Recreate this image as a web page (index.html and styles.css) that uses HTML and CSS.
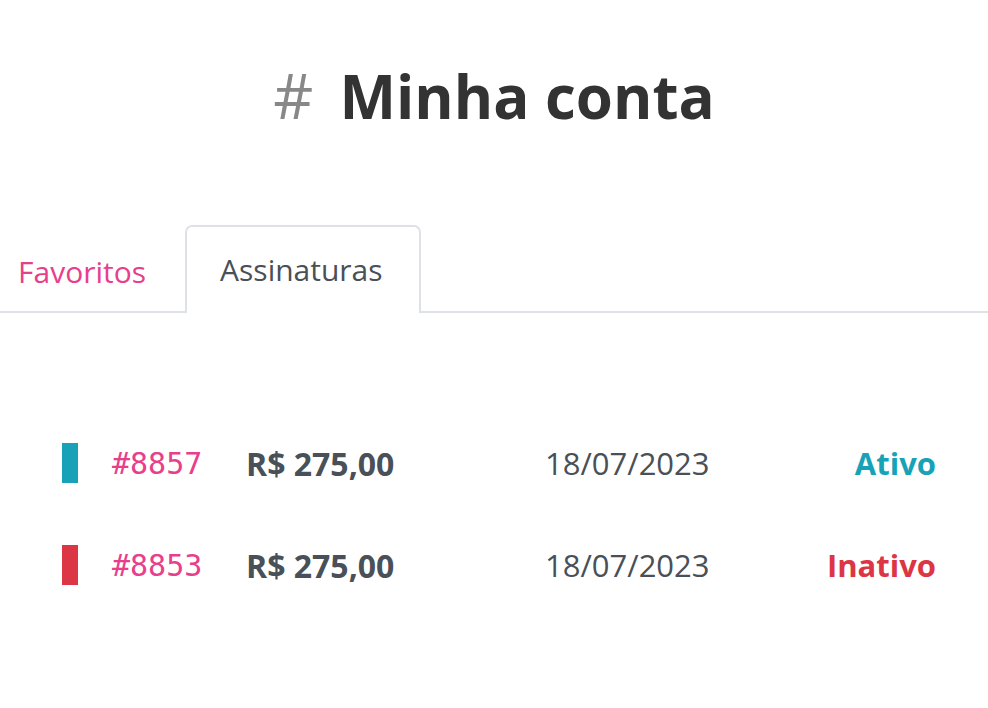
FILE: index.html
```html
<!DOCTYPE html>
<html lang="pt-BR">
<head>
<meta charset="utf-8">
<title>Minha conta</title>
<link rel="stylesheet" href="styles.css">
</head>
<body>
  <header class="page-header">
    <h1 class="title"><span class="hash">#</span>Minha conta</h1>
  </header>

  <nav class="tabs">
    <a class="tab" href="#">Favoritos</a>
    <a class="tab active" href="#">Assinaturas</a>
  </nav>

  <section class="subs">
    <div class="sub">
      <span class="bar bar-active"></span>
      <code class="sub-id">#8857</code>
      <strong class="amount">R$ 275,00</strong>
      <span class="date">18/07/2023</span>
      <strong class="status status-active">Ativo</strong>
    </div>
    <div class="sub">
      <span class="bar bar-inactive"></span>
      <code class="sub-id">#8853</code>
      <strong class="amount">R$ 275,00</strong>
      <span class="date">18/07/2023</span>
      <strong class="status status-inactive">Inativo</strong>
    </div>
  </section>
</body>
</html>
```

FILE: styles.css
```css
* { box-sizing: border-box; }

html, body {
  margin: 0;
  padding: 0;
  background: #fff;
}

body {
  font-family: "Open Sans", "Noto Sans", sans-serif;
  color: #495057;
  width: 988px;
  overflow: hidden;
}

.page-header {
  height: 196px;
  display: flex;
  align-items: center;
  justify-content: center;
  padding-bottom: 6px;
}

.title {
  margin: 0;
  font-size: 60px;
  font-weight: 700;
  color: #333;
  line-height: 1;
  display: flex;
  align-items: baseline;
}

.hash {
  font-weight: 400;
  font-size: 62px;
  color: #888;
  margin-right: 26px;
}

.tabs {
  display: flex;
  align-items: flex-end;
  height: 117px;
  border-bottom: 2px solid #dee2e6;
  padding-top: 31px;
}

.tab {
  display: block;
  font-size: 30px;
  line-height: 1;
  text-decoration: none;
  color: #e83e8c;
  padding: 28px 18px 26px 16px;
  border: 2px solid transparent;
  border-bottom: 0;
  border-radius: 7px 7px 0 0;
  margin-bottom: -2px;
}

.tab + .tab { margin-left: 19px; }

.tab.active {
  color: #495057;
  background: #fff;
  border-color: #dee2e6;
  padding: 28px 36px 28px 33px;
}

.subs {
  padding: 99px 52px 0 62px;
  display: flex;
  flex-direction: column;
}

.sub {
  display: grid;
  grid-template-columns: 50px 134px 299px 1fr auto;
  align-items: center;
  height: 102px;
  font-size: 31px;
}

.bar {
  width: 16px;
  height: 40px;
  display: block;
}
.bar-active { background: #17a2b8; }
.bar-inactive { background: #dc3545; }

.sub-id {
  font-family: "DejaVu Sans Mono", monospace;
  font-size: 30px;
  color: #e83e8c;
}

.amount { font-weight: 700; font-size: 32px; color: #495057; }
.date { color: #495057; }

.status { font-weight: 700; text-align: right; }
.status-active { color: #17a2b8; }
.status-inactive { color: #dc3545; }
```
